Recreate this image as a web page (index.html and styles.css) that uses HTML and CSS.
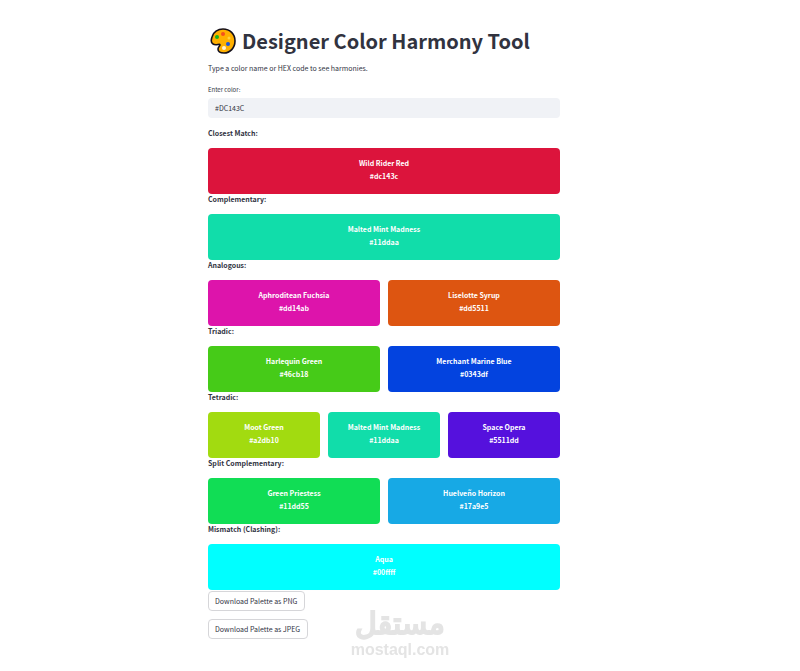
FILE: index.html
```html
<!DOCTYPE html>
<html lang="en">
<head>
    <meta charset="UTF-8">
    <meta name="viewport" content="width=device-width, initial-scale=1.0">
    <title>Designer Color Harmony Tool</title>
    <link rel="stylesheet" href="styles.css">
</head>
<body>
    <main class="container">
        <h1 class="title">
            <svg class="palette-icon" viewBox="0 0 26 26" aria-hidden="true">
                <path d="M13 1C20 1 25 6 25 13C25 20 20 25 14 25C10 25 8 23 8 21C8 19 10 18 10 17C10 15 6 18 3 16C1 15 1 12 2 9C3 4 8 1 13 1Z" fill="#ffb000" stroke="#15101a" stroke-width="1.6"/>
                <circle cx="7" cy="9" r="2" fill="#16b51c"/>
                <circle cx="13" cy="6" r="2" fill="#f4511e"/>
                <circle cx="19" cy="10" r="1.5" fill="#ffd23c"/>
                <circle cx="18" cy="16" r="2" fill="#1a56db"/>
                <circle cx="14" cy="20" r="2" fill="#fff3d6"/>
            </svg>
            Designer Color Harmony Tool
        </h1>
        <p class="intro">Type a color name or HEX code to see harmonies.</p>

        <label class="input-label" for="colorInput">Enter color:</label>
        <input type="text" id="colorInput" class="color-input" value="#DC143C">

        <section class="harmony">
            <h2>Closest Match:</h2>
            <div class="swatches">
                <div class="swatch wild-rider-red">Wild Rider Red<br>#dc143c</div>
            </div>
        </section>
        <section class="harmony">
            <h2>Complementary:</h2>
            <div class="swatches">
                <div class="swatch malted-mint">Malted Mint Madness<br>#11ddaa</div>
            </div>
        </section>
        <section class="harmony">
            <h2>Analogous:</h2>
            <div class="swatches">
                <div class="swatch fuchsia">Aphroditean Fuchsia<br>#dd14ab</div>
                <div class="swatch liselotte-syrup">Liselotte Syrup<br>#dd5511</div>
            </div>
        </section>
        <section class="harmony">
            <h2>Triadic:</h2>
            <div class="swatches">
                <div class="swatch harlequin-green">Harlequin Green<br>#46cb18</div>
                <div class="swatch marine-blue">Merchant Marine Blue<br>#0343df</div>
            </div>
        </section>
        <section class="harmony">
            <h2>Tetradic:</h2>
            <div class="swatches">
                <div class="swatch moot-green">Moot Green<br>#a2db10</div>
                <div class="swatch malted-mint">Malted Mint Madness<br>#11ddaa</div>
                <div class="swatch space-opera">Space Opera<br>#5511dd</div>
            </div>
        </section>
        <section class="harmony">
            <h2>Split Complementary:</h2>
            <div class="swatches">
                <div class="swatch green-priestess">Green Priestess<br>#11dd55</div>
                <div class="swatch huelveno-horizon">Huelveño Horizon<br>#17a9e5</div>
            </div>
        </section>
        <section class="harmony">
            <h2>Mismatch (Clashing):</h2>
            <div class="swatches">
                <div class="swatch aqua">Aqua<br>#00ffff</div>
            </div>
        </section>

        <div class="downloads">
            <button type="button">Download Palette as PNG</button>
            <button type="button">Download Palette as JPEG</button>
        </div>
    </main>

    <div class="watermark">
        <span class="watermark-name" lang="ar" dir="rtl">مستقل</span>
        <span class="watermark-site">mostaql.com</span>
    </div>
</body>
</html>
```

FILE: styles.css
```css
* {
    box-sizing: border-box;
}
body {
    font-family: "Noto Sans CJK JP", "Noto Sans", sans-serif;
    font-size: 7px;
    line-height: 12px;
    color: #31333f;
    background-color: white;
    margin: 0;
    padding: 28px 32px 32px 0;
}
.container {
    width: 100%;
    max-width: 352px;
    margin: 0 auto;
}
.title {
    display: flex;
    align-items: center;
    gap: 6px;
    margin: 0 0 8px;
    padding-left: 2px;
    font-size: 20px;
    font-weight: bold;
    line-height: 26px;
    white-space: nowrap;
}
.palette-icon {
    width: 26px;
    height: 26px;
    flex: none;
}
.intro {
    margin: 0 0 10px;
}
.input-label {
    display: block;
    margin-bottom: 2px;
    font-size: 6px;
}
.color-input {
    display: block;
    width: 100%;
    height: 20px;
    margin-bottom: 10px;
    padding: 0 7px;
    border: none;
    border-radius: 4px;
    background-color: #f0f2f6;
    color: #31333f;
    font: inherit;
}
.harmony h2 {
    margin: 0 0 10px;
    font-size: 7px;
    font-weight: bold;
    line-height: 10px;
}
.swatches {
    display: flex;
    gap: 8px;
}
.swatch {
    flex: 1;
    padding: 9px 0 11px;
    border-radius: 4px;
    color: white;
    font-weight: bold;
    line-height: 13px;
    text-align: center;
}
.wild-rider-red { background-color: #dc143c; }
.malted-mint { background-color: #11ddaa; }
.fuchsia { background-color: #dd14ab; }
.liselotte-syrup { background-color: #dd5511; }
.harlequin-green { background-color: #46cb18; }
.marine-blue { background-color: #0343df; }
.moot-green { background-color: #a2db10; }
.space-opera { background-color: #5511dd; }
.green-priestess { background-color: #11dd55; }
.huelveno-horizon { background-color: #17a9e5; }
.aqua { background-color: #00ffff; }

.downloads {
    display: flex;
    flex-direction: column;
    align-items: flex-start;
    gap: 8px;
    padding-top: 1px;
}
.downloads button {
    height: 20px;
    padding: 0 7px 0 6px;
    border: 1px solid #d6d6d9;
    border-radius: 4px;
    background-color: white;
    color: #31333f;
    font: inherit;
    cursor: pointer;
}

/* stays over the page, centered at the bottom */
.watermark {
    position: fixed;
    left: 0;
    right: 0;
    bottom: 13px;
    display: flex;
    flex-direction: column;
    align-items: center;
    color: #e4e4e4;
    pointer-events: none;
}
.watermark-name {
    font-family: "DejaVu Sans", sans-serif;
    font-size: 30px;
    line-height: 36px;
    -webkit-text-stroke: 2px #e4e4e4;
}
.watermark-site {
    font-family: "Liberation Sans", sans-serif;
    font-size: 16px;
    font-weight: bold;
    line-height: 16px;
}
```
